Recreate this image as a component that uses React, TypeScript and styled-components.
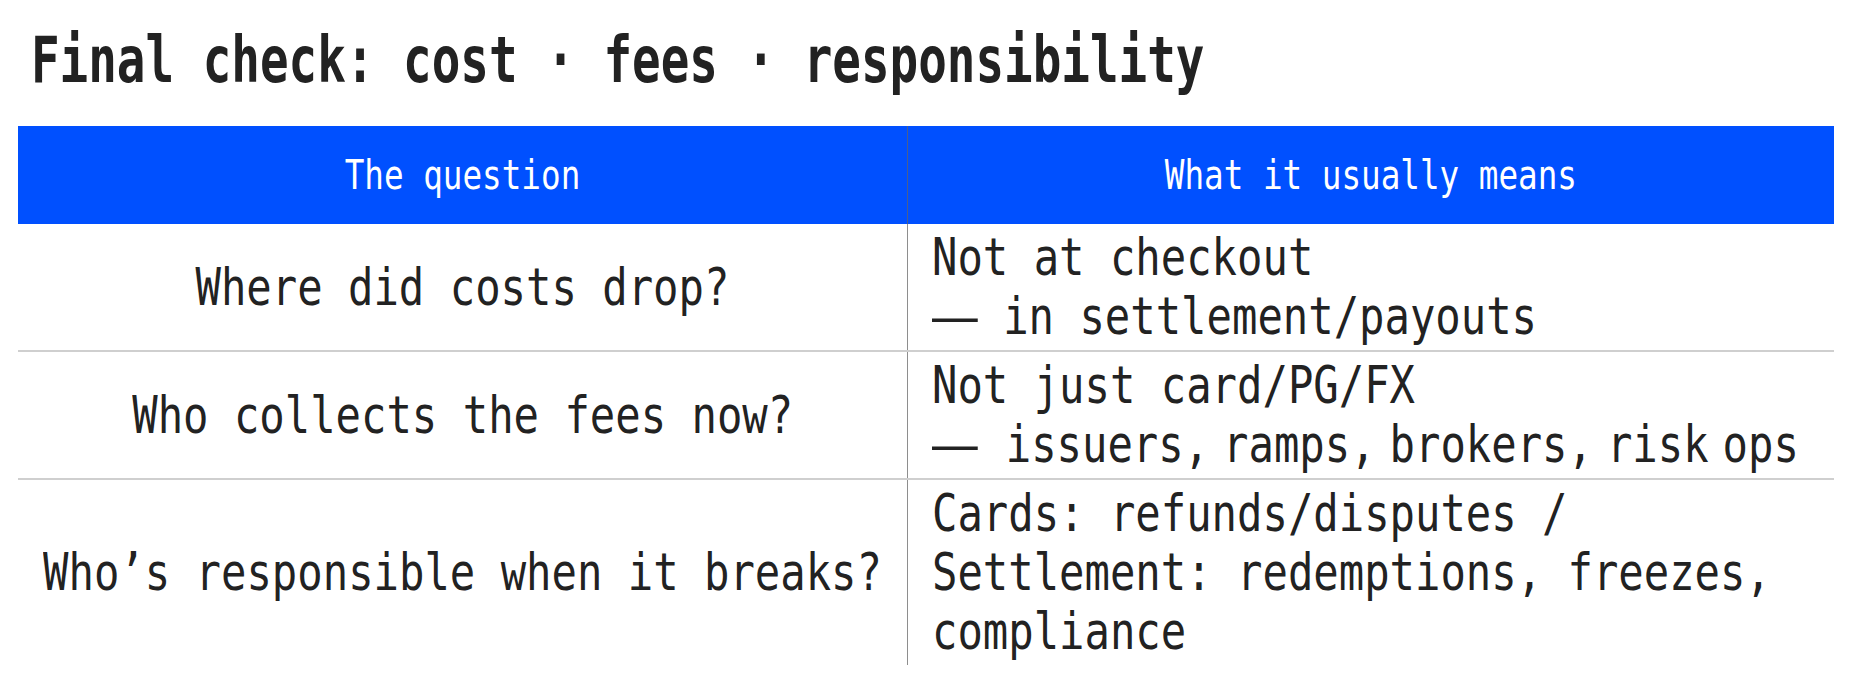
import styled, { createGlobalStyle } from "styled-components";

const GlobalStyle = createGlobalStyle`
  body {
    margin: 0;
    background: #ffffff;
    overflow: hidden;
  }
`;

const Page = styled.main`
  padding: 22px 0 0 18px;
  font-family: "DejaVu Sans Mono", "Liberation Mono", monospace;
  color: #222222;
`;

// the slide font is a condensed mono, so squeeze DejaVu Sans Mono sideways
const Squeeze = styled.span<{ $x: number; $origin?: string }>`
  display: inline-block;
  white-space: pre;
  transform: scaleX(${(p) => p.$x});
  transform-origin: ${(p) => p.$origin || "center"};
`;

const Title = styled.h1`
  margin: 0 0 28px 13px;
  font-size: 64.5px;
  line-height: 76px;
  font-weight: 700;
  white-space: nowrap;
`;

const Table = styled.div`
  width: 1816px;
  display: flex;
  flex-direction: column;
`;

const HeaderRow = styled.div`
  display: grid;
  grid-template-columns: 889px 1fr;
  height: 98px;
  background: #0050ff;
  color: #ffffff;
`;

const HeaderCell = styled.div<{ $divided?: boolean }>`
  display: flex;
  align-items: center;
  justify-content: center;
  font-size: 40px;
  line-height: 40px;
  border-left: ${(p) => (p.$divided ? "1px solid #4a5f8f" : "none")};
`;

const BodyRow = styled.div<{ $first?: boolean }>`
  display: grid;
  grid-template-columns: 889px 1fr;
  border-top: ${(p) => (p.$first ? "none" : "2px solid #cfcfcf")};
`;

const QuestionCell = styled.div`
  display: flex;
  align-items: center;
  justify-content: center;
  overflow: hidden;
  font-size: 50.7px;
  line-height: 59px;
  white-space: nowrap;
`;

const AnswerCell = styled.div`
  border-left: 1px solid #8e8e8e;
  padding: 4px 0 4px 24px;
  overflow: hidden;
  font-size: 50.7px;
  line-height: 59px;
`;

const AnswerLine = styled.div<{ $tight?: boolean }>`
  word-spacing: ${(p) => (p.$tight ? "-0.45ch" : "normal")};
`;

// long dash: stretched glyph, margin keeps its box as wide as what is drawn
const Dash = styled.span`
  display: inline-block;
  transform: scaleX(1.8);
  transform-origin: left center;
  margin-right: 0.8ch;
`;

type Line = { text: string; dash?: boolean; tight?: boolean };

const rows: { q: string; a: Line[] }[] = [
  {
    q: "Where did costs drop?",
    a: [{ text: "Not at checkout" }, { text: " in settlement/payouts", dash: true }],
  },
  {
    q: "Who collects the fees now?",
    a: [
      { text: "Not just card/PG/FX" },
      { text: "  issuers, ramps, brokers, risk ops", dash: true, tight: true },
    ],
  },
  {
    q: "Who’s responsible when it breaks?",
    a: [
      { text: "Cards: refunds/disputes /" },
      { text: "Settlement: redemptions, freezes," },
      { text: "compliance" },
    ],
  },
];

export default function App() {
  return (
    <>
      <GlobalStyle />
      <Page>
        <Title>
          <Squeeze $x={0.737} $origin="left">
            Final check: cost · fees · responsibility
          </Squeeze>
        </Title>
        <Table>
          <HeaderRow>
            <HeaderCell>
              <Squeeze $x={0.815}>The question</Squeeze>
            </HeaderCell>
            <HeaderCell $divided>
              <Squeeze $x={0.815}>What it usually means</Squeeze>
            </HeaderCell>
          </HeaderRow>
          {rows.map((row, i) => (
            <BodyRow key={row.q} $first={i === 0}>
              <QuestionCell>
                <Squeeze $x={0.833}>{row.q}</Squeeze>
              </QuestionCell>
              <AnswerCell>
                <Squeeze $x={0.833} $origin="left top">
                  {row.a.map((line) => (
                    <AnswerLine key={line.text} $tight={line.tight}>
                      {line.dash && <Dash>—</Dash>}
                      {line.text}
                    </AnswerLine>
                  ))}
                </Squeeze>
              </AnswerCell>
            </BodyRow>
          ))}
        </Table>
      </Page>
    </>
  );
}
